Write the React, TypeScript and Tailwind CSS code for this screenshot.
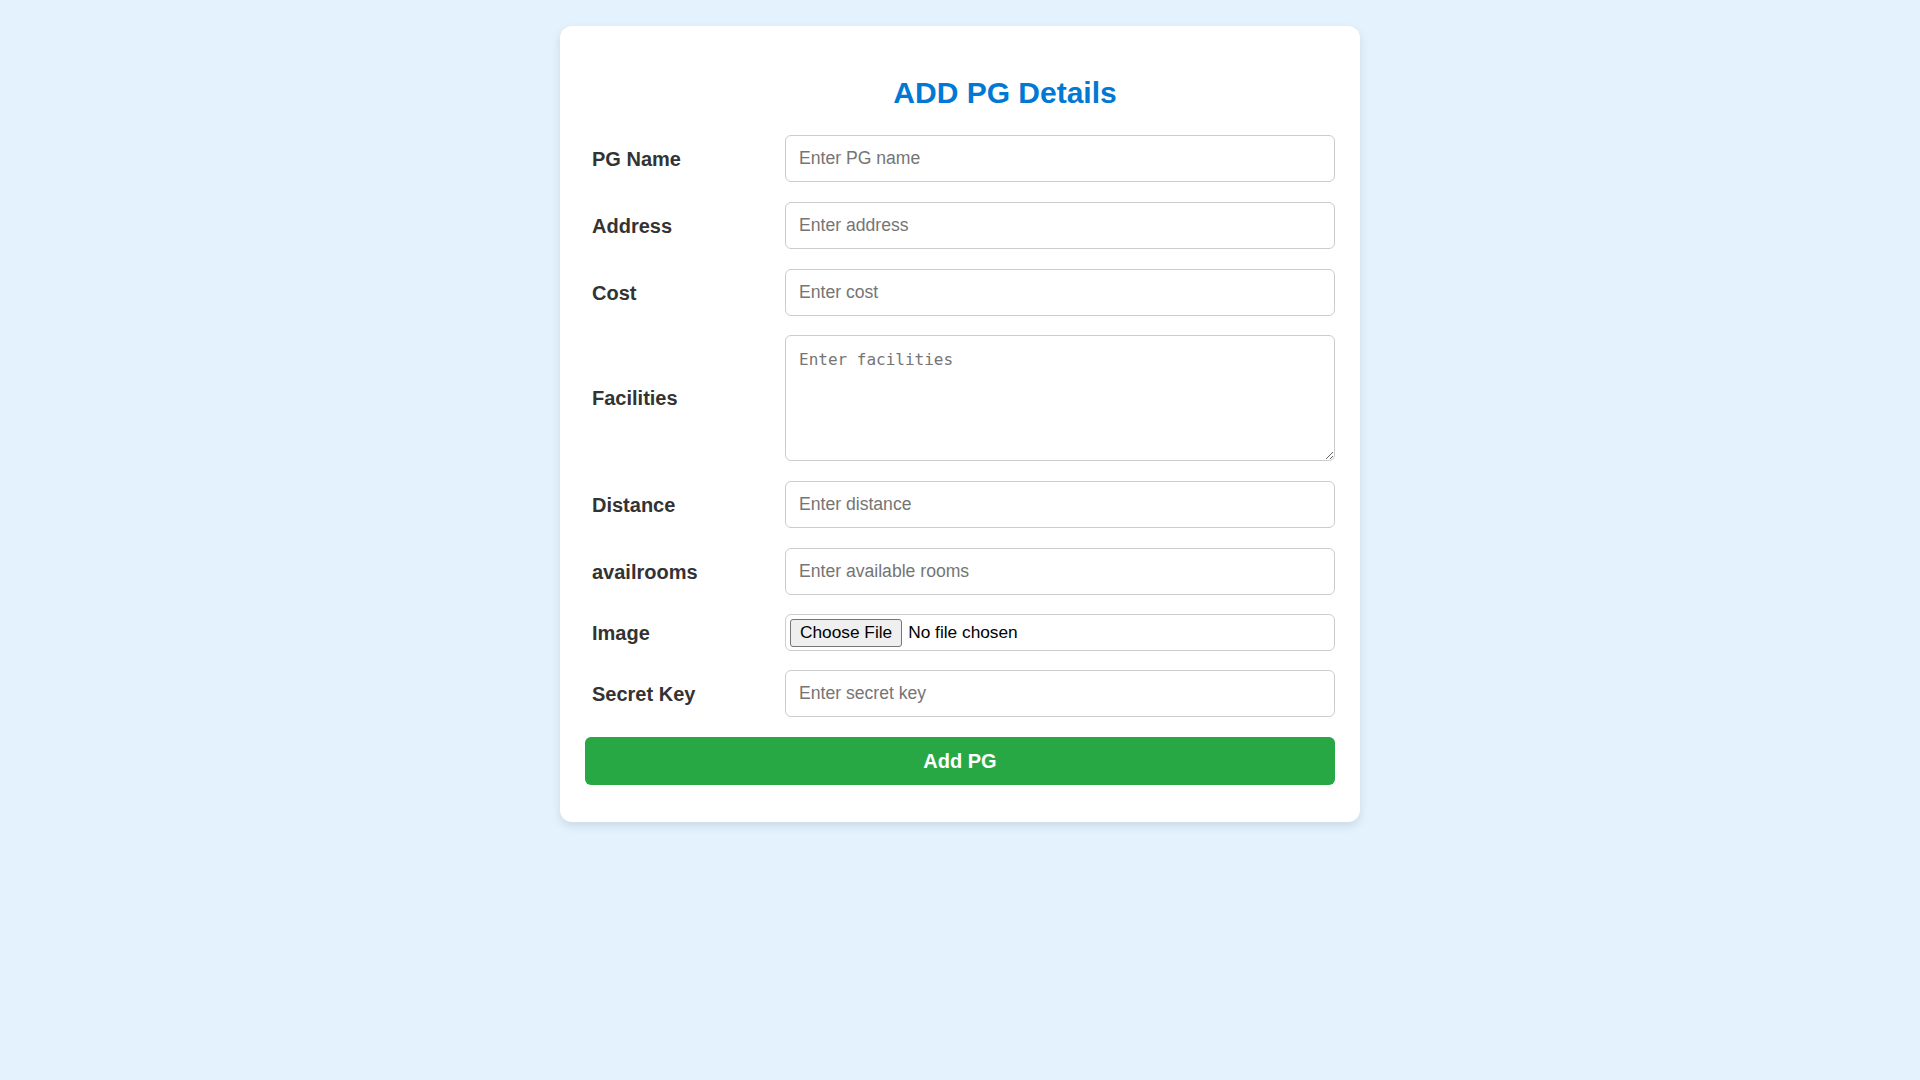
import { useState } from "react";

const fields = [
  { label: "PG Name", name: "name", placeholder: "Enter PG name" },
  { label: "Address", name: "address", placeholder: "Enter address" },
  { label: "Cost", name: "cost", placeholder: "Enter cost" },
];

const fieldsAfter = [
  { label: "Distance", name: "distance", placeholder: "Enter distance" },
  { label: "availrooms", name: "availrooms", placeholder: "Enter available rooms" },
];

const inputCls =
  "h-[47px] flex-1 rounded-[6px] border border-[#cccccc] bg-white px-[13px] text-[17.6px] text-[#333] outline-none placeholder:text-[#757575] font-['Liberation_Sans',Arial,sans-serif]";

function Row({ label, children, className = "" }: { label: string; children: React.ReactNode; className?: string }) {
  return (
    <div className={`flex items-center ${className}`}>
      <label className="w-[200px] shrink-0 pl-[7px] text-[20px] font-bold text-[#333333]">{label}</label>
      {children}
    </div>
  );
}

export default function App() {
  const [form, setForm] = useState<Record<string, string>>({});
  const update = (k: string, v: string) => setForm((f) => ({ ...f, [k]: v }));

  return (
    <div className="min-h-screen w-full bg-[#e3f2fd] pt-[26px] font-['Liberation_Sans',Arial,sans-serif]">
      <div className="mx-auto w-[800px] rounded-[12px] bg-white px-[25px] pb-[37px] pt-[49px] shadow-[0_4px_10px_rgba(0,0,0,0.1)]">
        <h2 className="mb-[25px] h-[35px] pl-[90px] text-center text-[30px] font-bold leading-[35px] text-[#0078d4]">
          ADD PG Details
        </h2>

        <form className="flex flex-col gap-[20px]" onSubmit={(e) => e.preventDefault()}>
          {fields.map((f) => (
            <Row key={f.name} label={f.label}>
              <input
                className={inputCls}
                placeholder={f.placeholder}
                value={form[f.name] ?? ""}
                onChange={(e) => update(f.name, e.target.value)}
              />
            </Row>
          ))}

          <Row label="Facilities" className="-mt-[1px]">
            <textarea
              className="h-[126px] flex-1 rounded-[6px] border border-[#cccccc] bg-white px-[13px] py-[12px] font-['DejaVu_Sans_Mono',monospace] text-[16px] text-[#333] outline-none placeholder:text-[#757575]"
              placeholder="Enter facilities"
              value={form.facilities ?? ""}
              onChange={(e) => update("facilities", e.target.value)}
            />
          </Row>

          {fieldsAfter.map((f) => (
            <Row key={f.name} label={f.label}>
              <input
                className={inputCls}
                placeholder={f.placeholder}
                value={form[f.name] ?? ""}
                onChange={(e) => update(f.name, e.target.value)}
              />
            </Row>
          ))}

          <Row label="Image" className="-mt-[1px]">
            <input
              type="file"
              className="h-[37px] flex-1 rounded-[6px] border border-[#cccccc] bg-white p-[4px] text-[17.3px] text-black file:mr-[6px] file:h-[28px] file:rounded-[3px] file:border file:border-[#767676] file:bg-[#efefef] file:px-[9px] file:text-black"
            />
          </Row>

          <Row label="Secret Key" className="-mt-[1px]">
            <input
              type="password"
              className={inputCls}
              placeholder="Enter secret key"
              value={form.key ?? ""}
              onChange={(e) => update("key", e.target.value)}
            />
          </Row>

          <button
            type="submit"
            className="h-[48px] w-full rounded-[6px] bg-[#28a745] text-[20px] font-bold text-white"
          >
            Add PG
          </button>
        </form>
      </div>
    </div>
  );
}
